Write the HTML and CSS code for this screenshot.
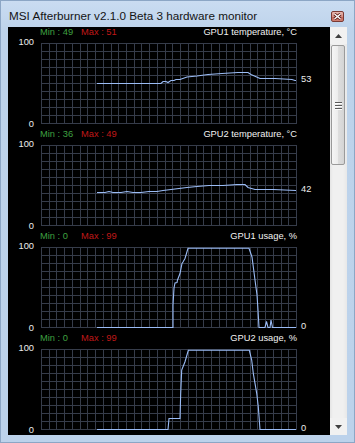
FILE: index.html
```html
<!DOCTYPE html>
<html>
<head>
<meta charset="utf-8">
<link rel="stylesheet" href="styles.css">
</head>
<body>
<div class="window">
  <div class="titlebar">
    <span class="title">MSI Afterburner v2.1.0 Beta 3 hardware monitor</span>
    <span class="close"><svg width="9" height="7" viewBox="0 0 9 7"><path d="M1.5 1L7.5 6M7.5 1L1.5 6" stroke="#5a1d18" stroke-width="3"/><path d="M1.5 1L7.5 6M7.5 1L1.5 6" stroke="#fff" stroke-width="1.4"/></svg></span>
  </div>
  <div class="client">
    <div class="graphs">
      <svg width="0" height="0" class="defs">
        <defs>
          <path id="grid" d="M0.5 0V81M8.5 0V81M15.5 0V81M23.5 0V81M31.5 0V81M39.5 0V81M46.5 0V81M54.5 0V81M62.5 0V81M70.5 0V81M77.5 0V81M85.5 0V81M93.5 0V81M100.5 0V81M108.5 0V81M116.5 0V81M124.5 0V81M131.5 0V81M139.5 0V81M147.5 0V81M155.5 0V81M162.5 0V81M170.5 0V81M178.5 0V81M185.5 0V81M193.5 0V81M201.5 0V81M209.5 0V81M216.5 0V81M224.5 0V81M232.5 0V81M240.5 0V81M247.5 0V81M255.5 0V81M0 0.5H256M0 8.5H256M0 16.5H256M0 24.5H256M0 32.5H256M0 40.5H256M0 48.5H256M0 56.5H256M0 64.5H256M0 72.5H256M0 80.5H256"/>
        </defs>
      </svg>

      <div class="graph">
        <div class="head"><span class="min">Min : 49</span><span class="max">Max : 51</span><span class="name">GPU1 temperature, °C</span></div>
        <div class="plot">
          <div class="yaxis"><span class="ytop">100</span><span class="ybot">0</span></div>
          <svg class="chart" width="256" height="81"><use href="#grid" class="gridlines"/><polyline class="line" points="56,40.5 120,40.5 122,38.5 125,38.5 127,39.5 130,37.5 133,37.5 135,36.5 139,36.5 146,34 156,33 167,31.5 181,30.5 197,29.5 207,29.5 210,31.5 219,35.5 234,35.5 251,36.5 254,37.5 255,37.5"/></svg>
          <div class="cur"><span style="margin-top:31px">53</span></div>
        </div>
      </div>

      <div class="graph">
        <div class="head"><span class="min">Min : 36</span><span class="max">Max : 49</span><span class="name">GPU2 temperature, °C</span></div>
        <div class="plot">
          <div class="yaxis"><span class="ytop">100</span><span class="ybot">0</span></div>
          <svg class="chart" width="256" height="81"><use href="#grid" class="gridlines"/><polyline class="line" points="56,47.5 64,47.5 68,46.5 72,47.5 80,47.5 86,46.5 92,47.5 100,47.5 108,46.5 116,46.5 122,45.5 130,44.5 138,43.5 146,42.5 156,41.5 168,40.5 182,40.5 196,39.5 204,39.5 207,42.5 214,44.5 232,44.5 255,45.5"/></svg>
          <div class="cur"><span style="margin-top:39px">42</span></div>
        </div>
      </div>

      <div class="graph">
        <div class="head"><span class="min">Min : 0</span><span class="max">Max : 99</span><span class="name">GPU1 usage, %</span></div>
        <div class="plot">
          <div class="yaxis"><span class="ytop">100</span><span class="ybot">0</span></div>
          <svg class="chart" width="256" height="81"><use href="#grid" class="gridlines"/><polyline class="line" points="56,80.5 132,80.5 132,58 133,41 134,36 136,35.5 136.5,33 139,26.5 141,16.5 142,15 144,11.5 147,1.3 208,1.3 211,10 214,33 216,48 217,63 218,80.5 224,80.5 225.5,74.5 227,80.5 229,80.5 230,73 231.5,80.5 255,80.5"/></svg>
          <div class="cur"><span style="margin-top:74px">0</span></div>
        </div>
      </div>

      <div class="graph">
        <div class="head"><span class="min">Min : 0</span><span class="max">Max : 99</span><span class="name">GPU2 usage, %</span></div>
        <div class="plot">
          <div class="yaxis"><span class="ytop">100</span><span class="ybot">0</span></div>
          <svg class="chart" width="256" height="81"><use href="#grid" class="gridlines"/><polyline class="line" points="56,80.5 127,80.5 128,69.5 139,69.5 139.7,44.5 140.7,21 144,12.7 147.3,1.3 208.3,1.3 210.7,11 212.3,24.3 215.7,44.3 217.3,57.7 219,80.5 255,80.5"/></svg>
          <div class="cur"><span style="margin-top:74px">0</span></div>
        </div>
      </div>
    </div>
    <div class="scroll">
      <div class="sbtn"><svg width="7" height="4" viewBox="0 0 7 4"><path d="M0 4L3.5 0L7 4Z" fill="#3f3f3f"/></svg></div>
      <div class="track">
        <div class="thumb"><span class="grip"></span><span class="grip"></span><span class="grip"></span></div>
      </div>
      <div class="sbtn"><svg width="7" height="4" viewBox="0 0 7 4"><path d="M0 0L3.5 4L7 0Z" fill="#3f3f3f"/></svg></div>
    </div>
  </div>
</div>
</body>
</html>
```

FILE: styles.css
```css
html, body {
  margin: 0;
  padding: 0;
  background: #bfd4ec;
}

.window {
  box-sizing: border-box;
  width: 355px;
  height: 443px;
  border: 1px solid #8ca6c5;
  padding: 0 7px 7px 7px;
  background: linear-gradient(#cadcf1, #bdd3eb 30px, #bcd2eb);
  display: flex;
  flex-direction: column;
}

.titlebar {
  box-sizing: border-box;
  height: 26px;
  padding-top: 8px;
  padding-left: 1px;
  display: flex;
  align-items: flex-start;
}

.title {
  font-family: "Liberation Sans", Arial, sans-serif;
  font-size: 11.7px;
  line-height: 14px;
  color: #141414;
}

.close {
  box-sizing: border-box;
  margin-left: auto;
  margin-right: 3px;
  margin-top: 2px;
  width: 13px;
  height: 11px;
  border: 1px solid #7b3a33;
  border-radius: 2px;
  background: linear-gradient(#eab9b1, #d58f85 50%, #c2675b 51%, #cf7f72);
  display: flex;
  align-items: center;
  justify-content: center;
}

.close svg {
  display: block;
}

.client {
  display: flex;
  height: 408px;
}

.graphs {
  width: 322px;
  background: #000;
  font-family: "Liberation Sans", Arial, sans-serif;
  font-size: 9.3px;
  line-height: 10px;
}

.defs {
  position: absolute;
  width: 0;
  height: 0;
}

.graph {
  height: 102px;
}

.head {
  display: flex;
  height: 16px;
  padding: 0 33px 0 32px;
}

.min {
  width: 41px;
  color: #3fa040;
}

.max {
  color: #c01818;
}

.name {
  margin-left: auto;
  color: #f2f2f2;
}

.plot {
  display: flex;
  height: 81px;
}

.yaxis {
  box-sizing: border-box;
  width: 33px;
  height: 81px;
  padding-right: 7px;
  display: flex;
  flex-direction: column;
  justify-content: space-between;
  align-items: flex-end;
  color: #ececec;
}

.ytop {
  margin-top: -6px;
}

.ybot {
  margin-bottom: -5px;
}

.chart {
  display: block;
  overflow: visible;
}

.gridlines {
  stroke: #363c4a;
  stroke-width: 1;
  fill: none;
}

.line {
  fill: none;
  stroke: #9bbcf6;
  stroke-width: 1.1;
}

.cur {
  padding-left: 4px;
  color: #ececec;
}

.cur span {
  display: block;
}

.scroll {
  width: 17px;
  display: flex;
  flex-direction: column;
  background: #eeeeee;
}

.sbtn {
  height: 17px;
  display: flex;
  align-items: center;
  justify-content: center;
  background: #f1f1f1;
}

.sbtn svg {
  display: block;
}

.track {
  flex: 1;
  background: linear-gradient(to right, #e4e4e4, #f0f0f0 3px, #f0f0f0 13px, #e8e8e8);
}

.thumb {
  box-sizing: border-box;
  margin: 1px 2px 0 1px;
  height: 120px;
  border: 1px solid #9a9a9a;
  border-radius: 2px;
  background: linear-gradient(to right, #f6f6f6, #ececec 50%, #dedede 51%, #d4d4d4);
  display: flex;
  flex-direction: column;
  align-items: center;
  justify-content: center;
  gap: 2px;
}

.grip {
  display: block;
  width: 7px;
  height: 1px;
  background: #5a5a5a;
  box-shadow: 0 1px 0 #ffffff;
}
```
